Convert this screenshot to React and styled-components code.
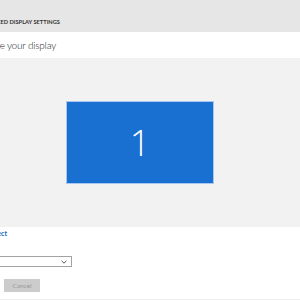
import React from 'react'
import styled, { createGlobalStyle } from 'styled-components'

const GlobalStyle = createGlobalStyle`
  html, body {
    margin: 0;
    padding: 0;
    background: #ffffff;
  }
  body {
    font-family: Lato, 'Open Sans', sans-serif;
  }
`

const Page = styled.div`
  width: 300px;
  height: 300px;
  overflow: hidden;
  display: flex;
  flex-direction: column;
  background: #ffffff;
  border-bottom: 1px solid #ececec;
  box-sizing: border-box;
`

// right-anchored strip: content wider than it spills out past the left edge
const Anchor = styled.div`
  width: ${p => p.$right}px;
  display: flex;
  justify-content: flex-end;
  white-space: nowrap;
`

const TitleBar = styled.div`
  height: 32px;
  flex: none;
  background: #e6e6e6;
  padding-top: 17px;
  box-sizing: border-box;
`

const Title = styled.span`
  font-family: Lato, sans-serif;
  font-size: 5.7px;
  font-weight: 700;
  color: #333333;
  line-height: 9px;
`

const HeadingBar = styled.div`
  height: 26px;
  flex: none;
  background: #ffffff;
  display: flex;
  align-items: center;
`

const Heading = styled.span`
  font-family: Lato, sans-serif;
  font-size: 10px;
  font-weight: 300;
  letter-spacing: -0.2px;
  color: #222222;
  line-height: 26px;
`

const Preview = styled.div`
  height: 169px;
  flex: none;
  background: #f2f2f2;
  padding: 43px 0 0 66px;
  box-sizing: border-box;
`

const Monitor = styled.div`
  width: 148px;
  height: 83px;
  box-sizing: border-box;
  background: #1a70d0;
  border: 1px solid #a9c6ee;
  display: flex;
  align-items: center;
  justify-content: center;
  color: #ffffff;
  font-family: 'Open Sans', sans-serif;
  font-weight: 300;
  font-size: 36px;
  line-height: 1;
`

const Controls = styled.div`
  display: flex;
  flex-direction: column;
`

const Links = styled.div`
  display: flex;
  gap: 14px;
  height: 11px;
  align-items: center;
`

const Link = styled.a`
  font-family: Lato, sans-serif;
  font-size: 7px;
  font-weight: 700;
  color: #1565c0;
  text-decoration: none;
`

const Select = styled.div`
  margin-top: 18px;
  width: 80px;
  margin-left: -8px;
  height: 11px;
  box-sizing: border-box;
  border: 1.5px solid #a3a3a3;
  background: #ffffff;
  display: flex;
  align-items: center;
  justify-content: flex-end;
  padding-right: 4px;
`

const Chevron = styled.svg`
  width: 6px;
  height: 4px;
`

const Button = styled.button`
  margin: 12px 0 0 4px;
  width: 36px;
  height: 13px;
  padding: 0;
  border: none;
  background: #cccccc;
  color: #9a9a9a;
  font-family: Lato, sans-serif;
  font-size: 6.5px;
  line-height: 13px;
`

export default function App () {
  return (
    <>
      <GlobalStyle />
      <Page>
        <TitleBar>
          <Anchor $right={60}>
            <Title>ADVANCED DISPLAY SETTINGS</Title>
          </Anchor>
        </TitleBar>
        <HeadingBar>
          <Anchor $right={56}>
            <Heading>Customize your display</Heading>
          </Anchor>
        </HeadingBar>
        <Preview>
          <Monitor>1</Monitor>
        </Preview>
        <Controls>
          <Anchor $right={7}>
            <Links>
              <Link href='#'>Identify</Link>
              <Link href='#'>Detect</Link>
            </Links>
          </Anchor>
          <Select>
            <Chevron viewBox='0 0 6 4'>
              <path d='M0.5 0.8 L3 3.2 L5.5 0.8' fill='none' stroke='#444' strokeWidth='0.9' />
            </Chevron>
          </Select>
          <Button disabled>Cancel</Button>
        </Controls>
      </Page>
    </>
  )
}
